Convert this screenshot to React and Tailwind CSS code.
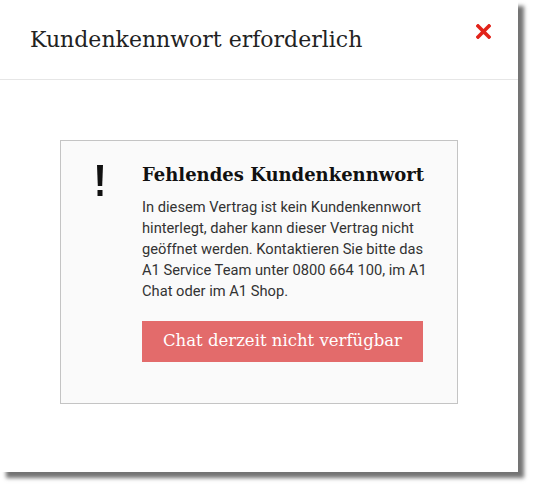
export default function App() {
  return (
    <div className="w-[533px] h-[488px] bg-white">
      <div className="w-[518px] h-[472px] bg-white shadow-[6px_6px_4px_rgba(0,0,0,0.55)] flex flex-col">
        <div className="h-[80px] border-b border-[#e6e6e6] flex items-start justify-between pl-[30px] pr-[27px]">
          <h1 className="mt-[26px] text-[22px] text-[#222] font-['DejaVu_Serif',serif] leading-[28px]">
            Kundenkennwort erforderlich
          </h1>
          <button className="mt-[24px]">
            <svg width="15" height="15" viewBox="0 0 15 15">
              <path d="M2 2 L13 13 M13 2 L2 13" stroke="#e2231a" strokeWidth="3.6" strokeLinecap="square" />
            </svg>
          </button>
        </div>
        <div className="px-[60px] pt-[60px]">
          <div className="bg-[#fafafa] border border-[#c4c4c4] h-[264px] flex pl-[35px] pt-[23px] pr-[20px]">
            <div className="w-[46px] shrink-0">
              <svg width="8" height="32" viewBox="0 0 8 32" className="mt-[1px]">
                <path d="M1 0 H7 L6.2 21 H1.8 Z" fill="#111" />
                <rect x="1.5" y="25" width="5" height="6" fill="#111" />
              </svg>
            </div>
            <div className="flex flex-col">
              <h2 className="text-[18px] font-bold text-[#111] font-['DejaVu_Serif',serif] leading-[24px] -mt-[1px]">
                Fehlendes Kundenkennwort
              </h2>
              <p className="mt-[10px] text-[14.7px] leading-[21px] text-[#333] font-['Roboto',sans-serif] w-[295px]">
                In diesem Vertrag ist kein Kundenkennwort hinterlegt, daher kann dieser Vertrag nicht geöffnet werden. Kontaktieren Sie bitte das A1 Service Team unter 0800 664 100, im A1 Chat oder im A1 Shop.
              </p>
              <button className="mt-[19px] w-[281px] h-[41px] bg-[#e36b6b] text-white text-[16.5px] font-['DejaVu_Serif',serif]">
                Chat derzeit nicht verfügbar
              </button>
            </div>
          </div>
        </div>
      </div>
    </div>
  );
}
